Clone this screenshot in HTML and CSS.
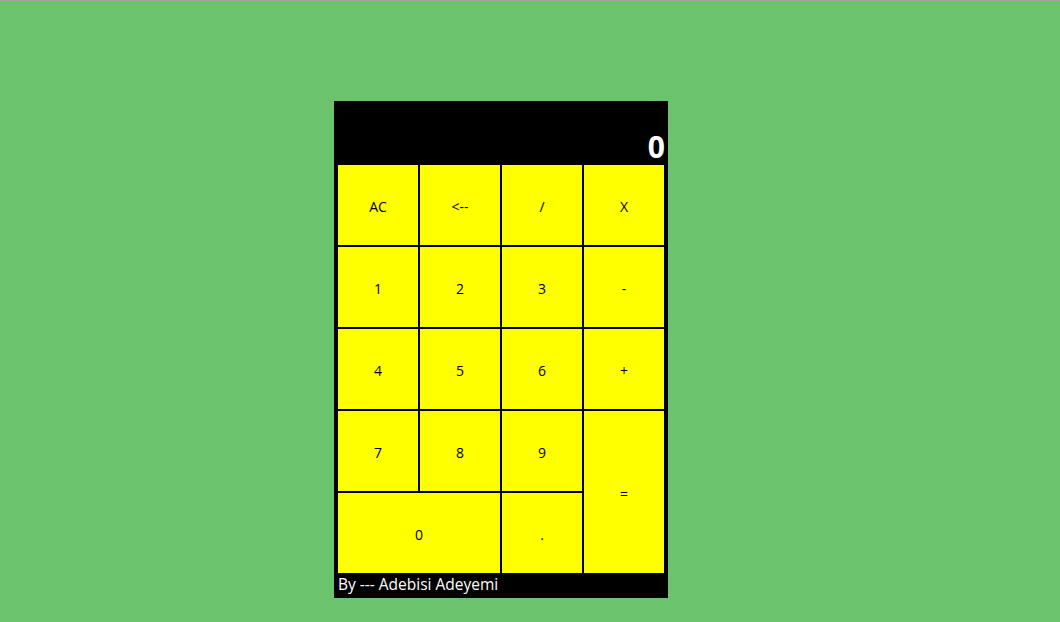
FILE: index.html
```html
<!DOCTYPE html>
<html lang="en">
<head>
<meta charset="utf-8">
<title>Calculator</title>
<link rel="stylesheet" href="styles.css">
</head>
<body>
<div class="calc">
  <div class="display"><span class="value">0</span></div>
  <div class="keys">
    <div class="key">AC</div>
    <div class="key">&lt;--</div>
    <div class="key">/</div>
    <div class="key">X</div>
    <div class="key">1</div>
    <div class="key">2</div>
    <div class="key">3</div>
    <div class="key">-</div>
    <div class="key">4</div>
    <div class="key">5</div>
    <div class="key">6</div>
    <div class="key">+</div>
    <div class="key">7</div>
    <div class="key">8</div>
    <div class="key">9</div>
    <div class="key key-equals">=</div>
    <div class="key key-zero">0</div>
    <div class="key">.</div>
  </div>
  <div class="footer">By --- Adebisi Adeyemi</div>
</div>
</body>
</html>
```
FILE: styles.css
```css
html {
  border-top: 1px solid #a3a3a3;
  background: #6bc46d;
}
body {
  margin: 0;
  height: 621px;
  background: #6bc46d;
  font-family: "Open Sans", "Noto Sans", sans-serif;
}
.calc {
  width: 334px;
  margin: 100px 0 0 334px;
  background: #000;
  display: flex;
  flex-direction: column;
}
.display {
  height: 64px;
  display: flex;
  justify-content: flex-end;
  align-items: flex-end;
  padding: 0 3px 3px 0;
  box-sizing: border-box;
}
.value {
  color: #fff;
  font-weight: 700;
  font-size: 30px;
  line-height: 30px;
}
.keys {
  display: grid;
  grid-template-columns: repeat(4, 80px);
  grid-auto-rows: 80px;
  gap: 2px;
  padding: 0 4px;
}
.key {
  background: #ffff00;
  color: #000;
  font-size: 14px;
  padding-top: 2px;
  box-sizing: border-box;
  display: flex;
  align-items: center;
  justify-content: center;
}
.key-equals {
  grid-column: 4;
  grid-row: 4 / span 2;
}
.key-zero {
  grid-column: 1 / span 2;
}
.footer {
  height: 25px;
  color: #fff;
  font-size: 15.5px;
  line-height: 22px;
  padding-left: 4px;
}
```
